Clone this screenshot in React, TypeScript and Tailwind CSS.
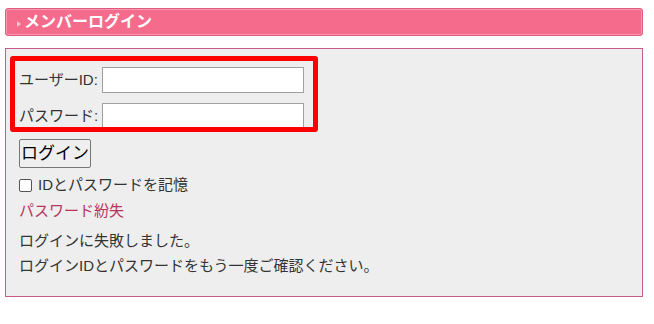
export default function App() {
  return (
    <div
      className="relative w-[654px] h-[324px] bg-white text-[#333] text-[15px]"
      style={{ fontFamily: '"Liberation Sans", "Noto Sans CJK JP", sans-serif' }}
    >
      <div className="pt-2 px-[5px] w-[648px]">
        {/* 見出し */}
        <div className="h-7 rounded-[3px] border border-[#dd5b7c] bg-[#f56b8b] shadow-[inset_0_0_0_1px_#f899b0] flex items-center pl-[11px]">
          <span className="w-0 h-0 border-y-[3px] border-y-transparent border-l-[4px] border-l-[#fbc3d1] mr-[3px] mt-[3px]" />
          <span className="text-white font-bold text-[16px] leading-none">メンバーログイン</span>
        </div>

        {/* ログインフォーム */}
        <div className="mt-3 h-[249px] border border-[#c85a8c] bg-[#eeeeee] pl-[13px] pt-[18px]">
          <div className="flex items-center h-[26px]">
            <label className="w-[83px]">ユーザーID:</label>
            <input className="w-[202px] h-[26px] border border-[#a0a0a0] bg-white outline-none" />
          </div>
          <div className="flex items-center h-[26px] mt-[10px]">
            <label className="w-[83px]">パスワード:</label>
            <input type="password" className="w-[202px] h-[26px] border border-[#a0a0a0] bg-white outline-none" />
          </div>
          <button className="mt-[10px] w-[72px] h-[29px] border border-[#767676] rounded-[2px] bg-[#efefef] text-[17px] text-black leading-none">
            ログイン
          </button>
          <label className="flex items-center h-[25px] mt-[5px]">
            <span className="w-[13px] h-[13px] border border-[#555] rounded-[2px] bg-white" />
            <span className="ml-[6px]">IDとパスワードを記憶</span>
          </label>
          <a className="block h-[25px] leading-[25px] text-[#b9355e]">パスワード紛失</a>
          <p className="mt-[5px] leading-[25px]">ログインに失敗しました。</p>
          <p className="leading-[25px]">ログインIDとパスワードをもう一度ご確認ください。</p>
        </div>
      </div>

      {/* 注記の赤枠 */}
      <div className="absolute left-[10px] top-[56px] w-[308px] h-[76px] border-[5px] border-[#ff0000] rounded-[3px] pointer-events-none" />
    </div>
  );
}
